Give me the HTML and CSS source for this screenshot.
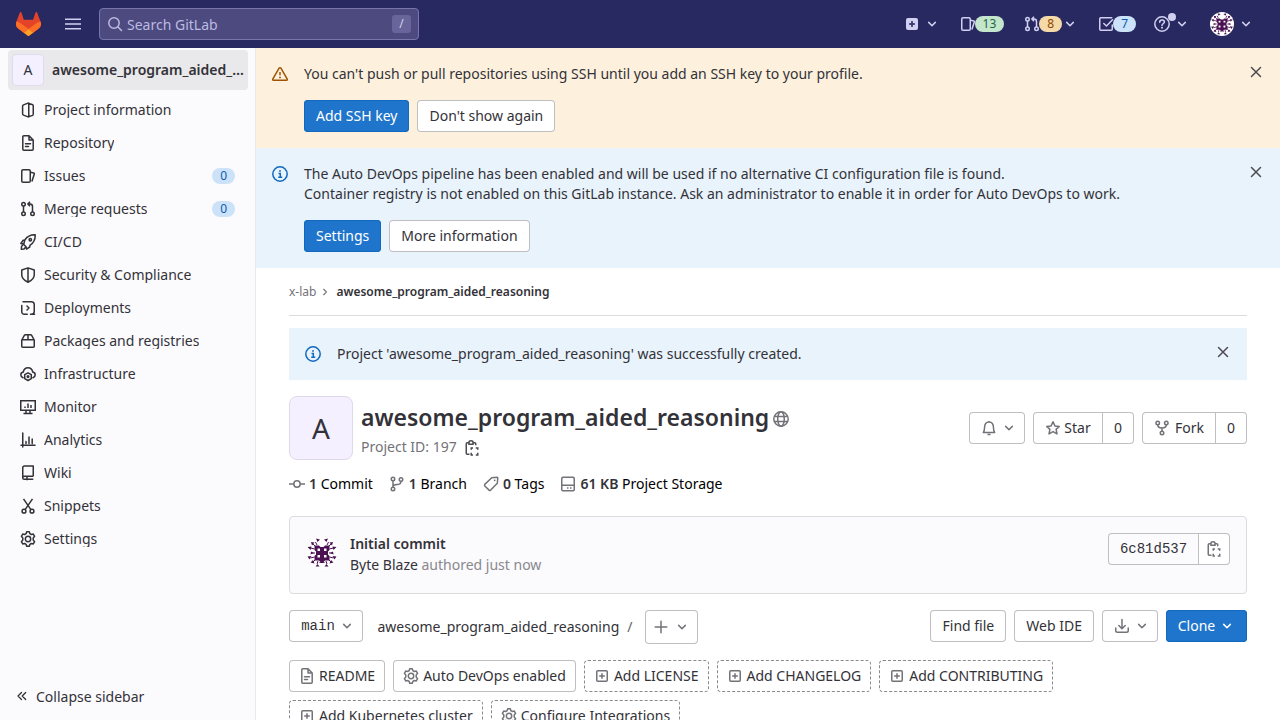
FILE: index.html
```html
<!DOCTYPE html>
<html lang="en">
<head>
<meta charset="utf-8">
<title>awesome_program_aided_reasoning · GitLab</title>
<link rel="stylesheet" href="styles.css">
</head>
<body>
<svg class="sprite" aria-hidden="true">
  <symbol id="chevron" viewBox="0 0 12 12"><path d="M2.7 4.4 6 7.7l3.3-3.3" stroke-linecap="round" stroke-linejoin="round"/></symbol>
  <symbol id="close" viewBox="0 0 16 16"><path d="m3.5 3.5 9 9m0-9-9 9" stroke-linecap="round"/></symbol>
  <symbol id="search" viewBox="0 0 16 16"><circle cx="7" cy="7" r="5.2"/><path d="m11 11 3.5 3.5" stroke-linecap="round"/></symbol>
  <symbol id="info" viewBox="0 0 16 16"><circle cx="8" cy="8" r="7.2"/><path d="M6.5 7.5h1.8v3.7M6.2 11.3h4"/><circle cx="8" cy="4.9" r=".95" fill="currentColor" stroke="none"/></symbol>
  <symbol id="warn" viewBox="0 0 16 16"><path d="M8 1.700c-.4 0-.7.2-.9.5L.9 12.800c-.4.7 0 1.500.8 1.500h12.600c.8 0 1.200-.8.8-1.500L8.900 2.200c-.2-.3-.5-.5-.9-.5ZM8 6v3.200" stroke-linejoin="round"/><circle cx="8" cy="11.400" r=".95" fill="currentColor" stroke="none"/></symbol>
  <symbol id="project" viewBox="0 0 16 16"><path d="M8.750.9 3.500 2.900q-.9.4-.9 1.300v7.600q0 .9.900 1.300l5.250 2ZM8.750 1.500l3.400.9q1.100.3 1.100 1.400v8.400q0 1.100-1.100 1.400l-3.400.9" stroke-linejoin="round"/></symbol>
  <symbol id="doc" viewBox="0 0 16 16"><path d="M9 .75H3.800a1 1 0 0 0-1 1v12.500a1 1 0 0 0 1 1h8.400a1 1 0 0 0 1-1V5L9 .75ZM9 .75V5h4.200" stroke-linejoin="round"/><path d="M5.500 8.700h5M5.500 11.500h3" stroke-linecap="round"/></symbol>
  <symbol id="issues" viewBox="0 0 16 16"><rect x="1.750" y="1.750" width="8.500" height="12.500" rx="1.300"/><path d="M10.500 4.200 13.800 5c.4.100.6.500.5.900l-2.400 7.600" stroke-linejoin="round"/></symbol>
  <symbol id="merge" viewBox="0 0 16 16"><circle cx="3.500" cy="3.300" r="1.750"/><circle cx="3.500" cy="12.700" r="1.750"/><circle cx="12.500" cy="12.700" r="1.750"/><path d="M3.500 5v6M12.500 11V5.500q0-2.500-2.500-2.500H8.500M10 .8 7.900 3 10 5.200"/></symbol>
  <symbol id="rocket" viewBox="0 0 16 16"><path d="M15.200.8C10.500.600 7.200 2.400 4.800 6L3 6.300.9 9.500l2.400.5 2.700 2.700.5 2.400 3.200-2.100.4-1.800c3.600-2.400 5.300-5.700 5.100-10.400ZM3.300 10l-1.800 2.700-.2 2.500 2.700-.3 2-2.200M4.800 6l-1 4" stroke-linejoin="round"/><circle cx="10.300" cy="5.800" r="1.200"/></symbol>
  <symbol id="shield" viewBox="0 0 16 16"><path d="M8 .9 1.750 3v4.800c0 3.400 2.200 5.600 6.250 7.400 4.050-1.800 6.250-4 6.250-7.400V3L8 .9v14.200" stroke-linejoin="round"/></symbol>
  <symbol id="deploy" viewBox="0 0 16 16"><path d="M3 1.750h8.250a3 3 0 0 1 3 3v6.500a3 3 0 0 1-3 3H10.500M1.750 5.500v6.250a2.500 2.500 0 0 0 2.500 2.500h3M1.750 5.500v1.500M12 14.250h2.500M7 6l2 2-2 2" stroke-linecap="round" stroke-linejoin="round"/></symbol>
  <symbol id="package" viewBox="0 0 16 16"><path d="M1.750 7 4.200 2.700q.4-.950 1.300-.950h5q.9 0 1.300.950L14.250 7v6.200q0 1-1 1H2.750q-1 0-1-1ZM1.750 6.700h12.500M8 1.750v5" stroke-linejoin="round"/></symbol>
  <symbol id="cloud" viewBox="0 0 16 16"><path d="M3 11.700C1.500 11.200.8 10.200.8 8.800c0-1.500 1-2.600 2.500-2.800C3.800 3.300 5.500 1.800 8 1.800S12.200 3.300 12.700 6c1.500.2 2.500 1.300 2.500 2.800 0 1.400-.7 2.400-2.200 2.900" stroke-linecap="round"/><path d="m8 6.800 3.300 1.900v3.900L8 14.500l-3.300-1.900V8.700Z" stroke-linejoin="round"/><circle cx="8" cy="10.600" r=".8"/></symbol>
  <symbol id="monitor" viewBox="0 0 16 16"><path d="M.75 1.750h14.500v9.500H.75ZM3.500 14.500h9M6 11.300v3M10 11.300v3M5 7.500V9M8 4.500V9M11 6V9"/></symbol>
  <symbol id="chart" viewBox="0 0 16 16"><path d="M2.750 1v14M1 13.250h14M6 9.500v2M9 5v6.500M12.200 7v4.500" stroke-linecap="round"/></symbol>
  <symbol id="book" viewBox="0 0 16 16"><path d="M13.250 11.250V.9H4.500q-1.750 0-1.750 1.750V13q0 1.250 1.500 1.250h9M2.750 12.700q.2-1.450 1.750-1.450h8.750M7 11.300v4" stroke-linejoin="round"/></symbol>
  <symbol id="scissors" viewBox="0 0 16 16"><circle cx="4" cy="13.200" r="1.900"/><circle cx="12" cy="13.200" r="1.900"/><path d="M3.500.8 10.900 11.600M12.500.8 5.100 11.600"/></symbol>
  <symbol id="gear" viewBox="0 0 16 16"><path d="M6.700.8h2.600l.6 1.900 1.400.8 2-.4 1.300 2.200L13.200 6.900v2.200l1.400 1.600-1.300 2.200-2-.4-1.400.8-.6 1.900H6.700l-.6-1.900-1.400-.8-2 .4-1.300-2.200L2.800 9.100V6.900L1.400 5.300l1.300-2.200 2 .4 1.400-.8Z" stroke-linejoin="round"/><circle cx="8" cy="8" r="2.700"/></symbol>
  <symbol id="collapse" viewBox="0 0 16 16"><path d="M7.500 4.500 4 8l3.500 3.500M11.700 4.500 8.200 8l3.500 3.500" stroke-width="1.300" stroke-linecap="round" stroke-linejoin="round"/></symbol>
  <symbol id="globe" viewBox="0 0 16 16"><circle cx="8" cy="8" r="7.200"/><ellipse cx="8" cy="8" rx="3.300" ry="7.200"/><path d="M1.500 5.500h13M1.500 10.500h13"/></symbol>
  <symbol id="copy" viewBox="0 0 16 16"><path d="M5 2.750H3.250a1 1 0 0 0-1 1v9.500a1 1 0 0 0 1 1H5.500M9.500 2.750h1.250a1 1 0 0 1 1 1v1.500M5 4.250v-2q0-1.500 2-1.500t2 1.500v2Z"/><path d="M7.250 9.750V8H9M11.750 8h2V9.750M13.750 12.750v2.250h-2M9 15H7.250V12.750"/></symbol>
  <symbol id="commit" viewBox="0 0 16 16"><circle cx="8" cy="8" r="3.200"/><path d="M0 8h4.800M11.200 8H16"/></symbol>
  <symbol id="branch" viewBox="0 0 16 16"><circle cx="4" cy="3" r="1.750"/><circle cx="12" cy="3.500" r="1.750"/><circle cx="4" cy="13" r="1.750"/><path d="M4 4.800v6.400M12 5.200q0 3.300-4 3.300-4 0-4 2.700"/></symbol>
  <symbol id="tag" viewBox="0 0 16 16"><path d="M8.700 1.700 14 1.200q.8 0 .8.800l-.5 5.300-6.600 6.800q-.8.700-1.600 0L1.800 10q-.7-.8 0-1.600Z" stroke-linejoin="round"/><circle cx="11.700" cy="4.300" r=".9" fill="currentColor" stroke="none"/></symbol>
  <symbol id="disk" viewBox="0 0 16 16"><rect x="1.750" y="1.250" width="12.500" height="13.500" rx="1.200"/><path d="M1.800 9.250h12.400M7 12h1.500M10 12h1.500"/></symbol>
  <symbol id="bell" viewBox="0 0 16 16"><path d="M2.300 12.500h11.400c-1-1-1.200-2-1.200-4.500 0-3.800-1.500-6-4.500-6S3.500 4.200 3.500 8c0 2.500-.2 3.500-1.200 4.500ZM8 2V.9M6.500 14.500h3" stroke-linejoin="round"/></symbol>
  <symbol id="star" viewBox="0 0 16 16"><path d="m8 1.800 1.900 4.100 4.400.5-3.200 3 .9 4.500-4-2.300-4 2.300.9-4.500-3.200-3 4.400-.5Z" stroke-linejoin="round"/></symbol>
  <symbol id="fork" viewBox="0 0 16 16"><circle cx="3.700" cy="3" r="1.750"/><circle cx="12.300" cy="3" r="1.750"/><circle cx="8" cy="13" r="1.750"/><path d="M3.700 4.800Q3.700 8 8 8t4.300-3.200M8 8v3.200"/></symbol>
  <symbol id="plus" viewBox="0 0 16 16"><path d="M8 2.200v11.600M2.200 8h11.600" stroke-linecap="round"/></symbol>
  <symbol id="plusbox" viewBox="0 0 16 16"><rect x="2.750" y="2.750" width="10.500" height="10.500" rx="1"/><path d="M8 5.200v5.600M5.200 8h5.600"/></symbol>
  <symbol id="download" viewBox="0 0 16 16"><path d="M8 1.500v9M4.800 7.500 8 10.700l3.200-3.200M1.750 10v2.500q0 1.750 1.750 1.750h9q1.750 0 1.750-1.750V10" stroke-linecap="round" stroke-linejoin="round"/></symbol>
  <symbol id="todo" viewBox="0 0 16 16"><path d="M14.250 9v4.200q0 1-1 1H2.750q-1 0-1-1V2.800q0-1 1-1h11M5.800 7.500 8.500 10l6-6.200" stroke-linecap="round"/></symbol>
  <symbol id="help" viewBox="0 0 16 16"><circle cx="8" cy="8" r="7.200"/><path d="M5.700 6.300C5.700 4.900 6.700 4 8 4s2.400.9 2.400 2.100C10.400 7.500 8 7.600 8 9.500" stroke-linecap="round"/><circle cx="8" cy="11.800" r="1" fill="currentColor" stroke="none"/></symbol>
  <symbol id="identicon" viewBox="0 0 32 32">
    <circle cx="16" cy="16" r="16" fill="#fff" stroke="none"/>
    <g fill="#4b1152" stroke="none">
      <path d="M8.500 8.500H13L14.500 10h3L19 8.500h4.500V13L22 14.500v3l1.500 1.500v4.500H19L17.500 25l2 1h-7l2-1-1.500-1.500H8.500V19l1.500-1.500v-3L8.500 13Z"/>
      <path d="M10 1.500l4 1-2.500 2.500ZM22 1.500l-4 1 2.500 2.500ZM5 5l3.500.5L6 8.500ZM27 5l-3.500.5L26 8.500ZM1.500 10l4-.5-1 3.500ZM30.500 10l-4-.5 1 3.500ZM5 14.500l3 1.500-3.500 1.500ZM27 14.500l-3 1.500 3.500 1.500ZM1.500 19.500l4-.5-2 3.500ZM30.500 19.500l-4-.5 2 3.500ZM4.500 25.500l2.500-2.500 1.500 3.500ZM27.500 25.500l-2.500-2.500-1.500 3.500ZM9.500 29.500l2-2.500 2 2.500ZM22.500 29.500l-2-2.500-2 2.500ZM8.500 8.500l-2-1 .5-1ZM23.500 8.500l2-1-.5-1Z"/>
      <path d="M9 9 6 6M23 9l3-3M9 23l-3 3M23 23l3 3M6 16h3M26 16h-3M11 8 9.500 5M21 8l1.500-3M8.500 20l-4 1M23.500 20l4 1M8.500 12l-4-1M23.500 12l4-1M12 24l-1 3M20 24l1 3" stroke="#4b1152" stroke-width="1"/>
    </g>
    <path d="M11.500 11.500h2.500v2.500h-2.500ZM18 11.500h2.500v2.500H18ZM11.500 18h2.500v2.500h-2.500ZM18 18h2.500v2.500H18Z" fill="#fff" stroke="none"/>
  </symbol>
</svg>

<header class="topbar">
  <svg class="logo" viewBox="0 0 25 24"><path fill="#e24329" d="m24.507 9.500-.034-.09L21.082.562a.896.896 0 0 0-1.694.091l-2.290 7.010H7.825L5.535.653a.898.898 0 0 0-1.694-.09L.451 9.411.416 9.500a6.297 6.297 0 0 0 2.090 7.278l.012.010.030.022 5.160 3.867 2.560 1.935 1.554 1.176a1.051 1.051 0 0 0 1.268 0l1.555-1.176 2.560-1.935 5.197-3.890.014-.010A6.297 6.297 0 0 0 24.507 9.500Z"/><path fill="#fc6d26" d="m24.507 9.500-.034-.09a11.440 11.440 0 0 0-4.560 2.051l-7.447 5.632 4.742 3.584 5.197-3.890.014-.010A6.297 6.297 0 0 0 24.507 9.500Z"/><path fill="#fca326" d="m7.707 20.677 2.560 1.935 1.555 1.176a1.051 1.051 0 0 0 1.268 0l1.555-1.176 2.560-1.935-4.743-3.584Z"/><path fill="#fc6d26" d="M5.010 11.461a11.430 11.430 0 0 0-4.560-2.050L.416 9.500a6.297 6.297 0 0 0 2.090 7.278l.012.010.030.022 5.160 3.867 4.745-3.584Z"/></svg>
  <svg class="burger" viewBox="0 0 16 16"><path d="M0 3.200h16M0 8h16M0 12.800h16"/></svg>
  <div class="search"><svg class="icon"><use href="#search"/></svg><span class="placeholder">Search GitLab</span><kbd>/</kbd></div>
  <nav class="tools">
    <span class="tool new"><svg class="icon" viewBox="0 0 16 16"><rect x="2" y="2" width="12" height="12" rx="2" fill="#d1d0f0" stroke="none"/><path d="M8 5v6M5 8h6" stroke="#292961"/></svg><svg class="chev"><use href="#chevron"/></svg></span>
    <span class="tool"><svg class="icon"><use href="#issues"/></svg><b class="badge green">13</b></span>
    <span class="tool mr"><svg class="icon"><use href="#merge"/></svg><b class="badge orange">8</b><svg class="chev"><use href="#chevron"/></svg></span>
    <span class="tool todo"><svg class="icon"><use href="#todo"/></svg><b class="badge blue">7</b></span>
    <span class="tool help"><svg class="icon"><use href="#help"/></svg><i class="dot"></i><svg class="chev"><use href="#chevron"/></svg></span>
    <span class="tool user"><svg class="face"><use href="#identicon"/></svg><svg class="chev"><use href="#chevron"/></svg></span>
  </nav>
</header>

<div class="layout">
  <aside class="sidebar">
    <div class="context"><span class="letter">A</span><strong>awesome_program_aided_reasoning</strong></div>
    <ul class="menu">
      <li><svg class="icon"><use href="#project"/></svg><span>Project information</span></li>
      <li><svg class="icon"><use href="#doc"/></svg><span>Repository</span></li>
      <li><svg class="icon"><use href="#issues"/></svg><span>Issues</span><b class="badge blue">0</b></li>
      <li><svg class="icon"><use href="#merge"/></svg><span>Merge requests</span><b class="badge blue">0</b></li>
      <li><svg class="icon"><use href="#rocket"/></svg><span>CI/CD</span></li>
      <li><svg class="icon"><use href="#shield"/></svg><span>Security &amp; Compliance</span></li>
      <li><svg class="icon"><use href="#deploy"/></svg><span>Deployments</span></li>
      <li><svg class="icon"><use href="#package"/></svg><span>Packages and registries</span></li>
      <li><svg class="icon"><use href="#cloud"/></svg><span>Infrastructure</span></li>
      <li><svg class="icon"><use href="#monitor"/></svg><span>Monitor</span></li>
      <li><svg class="icon"><use href="#chart"/></svg><span>Analytics</span></li>
      <li><svg class="icon"><use href="#book"/></svg><span>Wiki</span></li>
      <li><svg class="icon"><use href="#scissors"/></svg><span>Snippets</span></li>
      <li><svg class="icon"><use href="#gear"/></svg><span>Settings</span></li>
    </ul>
    <div class="collapse"><svg class="icon"><use href="#collapse"/></svg><span>Collapse sidebar</span></div>
  </aside>

  <main class="main">
    <section class="alert warning">
      <svg class="icon mark"><use href="#warn"/></svg>
      <div class="alert-body"><p>You can't push or pull repositories using SSH until you add an SSH key to your profile.</p>
        <div class="actions"><button class="btn primary">Add SSH key</button><button class="btn">Don't show again</button></div></div>
      <svg class="icon close"><use href="#close"/></svg>
    </section>
    <section class="alert">
      <svg class="icon mark"><use href="#info"/></svg>
      <div class="alert-body"><p>The Auto DevOps pipeline has been enabled and will be used if no alternative CI configuration file is found.<br>Container registry is not enabled on this GitLab instance. Ask an administrator to enable it in order for Auto DevOps to work.</p>
        <div class="actions"><button class="btn primary">Settings</button><button class="btn">More information</button></div></div>
      <svg class="icon close"><use href="#close"/></svg>
    </section>

    <div class="content">
      <nav class="crumbs"><span>x-lab</span><svg class="chev right"><use href="#chevron"/></svg><strong>awesome_program_aided_reasoning</strong></nav>
      <section class="alert flash">
        <svg class="icon mark"><use href="#info"/></svg>
        <div class="alert-body"><p>Project 'awesome_program_aided_reasoning' was successfully created.</p></div>
        <svg class="icon close"><use href="#close"/></svg>
      </section>

      <section class="project">
        <span class="avatar">A</span>
        <div class="names">
          <h1>awesome_program_aided_reasoning<svg class="icon"><use href="#globe"/></svg></h1>
          <p>Project ID: 197<svg class="icon"><use href="#copy"/></svg></p>
        </div>
        <div class="project-actions">
          <button class="btn drop"><svg class="icon"><use href="#bell"/></svg><svg class="chev"><use href="#chevron"/></svg></button>
          <div class="group"><button class="btn star"><svg class="icon"><use href="#star"/></svg>Star</button><button class="btn count">0</button></div>
          <div class="group"><button class="btn fork"><svg class="icon"><use href="#fork"/></svg>Fork</button><button class="btn count">0</button></div>
        </div>
      </section>

      <div class="stats">
        <span><svg class="icon"><use href="#commit"/></svg><strong>1</strong>&nbsp;Commit</span>
        <span><svg class="icon"><use href="#branch"/></svg><strong>1</strong>&nbsp;Branch</span>
        <span><svg class="icon"><use href="#tag"/></svg><strong>0</strong>&nbsp;Tags</span>
        <span><svg class="icon"><use href="#disk"/></svg><strong>61 KB</strong>&nbsp;Project Storage</span>
      </div>

      <section class="commit">
        <svg class="face"><use href="#identicon"/></svg>
        <div class="commit-text"><strong>Initial commit</strong><p>Byte Blaze <span>authored just now</span></p></div>
        <div class="group"><button class="btn sha">6c81d537</button><button class="btn copy"><svg class="icon"><use href="#copy"/></svg></button></div>
      </section>

      <div class="tree">
        <button class="btn ref">main<svg class="chev"><use href="#chevron"/></svg></button>
        <span class="path">awesome_program_aided_reasoning</span><span class="slash">/</span>
        <button class="btn add"><svg class="icon"><use href="#plus"/></svg><svg class="chev"><use href="#chevron"/></svg></button>
        <div class="tree-actions">
          <button class="btn find">Find file</button><button class="btn">Web IDE</button>
          <button class="btn drop"><svg class="icon"><use href="#download"/></svg><svg class="chev"><use href="#chevron"/></svg></button>
          <button class="btn primary clone">Clone<svg class="chev"><use href="#chevron"/></svg></button>
        </div>
      </div>

      <div class="chips">
        <button class="btn chip"><svg class="icon"><use href="#doc"/></svg>README</button>
        <button class="btn chip"><svg class="icon"><use href="#gear"/></svg>Auto DevOps enabled</button>
        <button class="btn chip dashed"><svg class="icon"><use href="#plusbox"/></svg>Add LICENSE</button>
        <button class="btn chip dashed"><svg class="icon"><use href="#plusbox"/></svg>Add CHANGELOG</button>
        <button class="btn chip dashed"><svg class="icon"><use href="#plusbox"/></svg>Add CONTRIBUTING</button>
        <button class="btn chip dashed"><svg class="icon"><use href="#plusbox"/></svg>Add Kubernetes cluster</button>
        <button class="btn chip dashed"><svg class="icon"><use href="#gear"/></svg>Configure Integrations</button>
      </div>
    </div>
  </main>
</div>
</body>
</html>
```
FILE: styles.css
```css
* { box-sizing: border-box; }
body {
  margin: 0;
  height: 720px;
  overflow: hidden;
  background: #fff;
  color: #333238;
  font: 14px/20px "Noto Sans", sans-serif;
}
p, h1, ul { margin: 0; padding: 0; }
strong { font-weight: 600; }
.sprite { display: none; }
svg { flex: none; fill: none; stroke: currentColor; stroke-width: 1.5; }
.icon { width: 16px; height: 16px; }
.chev { width: 12px; height: 12px; }

/* Top bar */
.topbar { display: flex; align-items: center; height: 48px; padding: 0 28px 0 16px; background: #292961; color: #d1d0f0; }
.logo { width: 25px; height: 24px; stroke: none; }
.burger { width: 16px; height: 16px; margin: 0 18px 0 24px; }
.search { display: flex; align-items: center; width: 320px; height: 32px; padding: 0 7px; border: 1px solid #7775ae; border-radius: 4px; background: #4d4a80; color: #bbbae0; }
.placeholder { flex: 1; margin-left: 4px; padding-top: 1px; }
kbd { width: 19px; height: 18px; border-radius: 3px; background: #67659a; color: #d1d0f0; font: 12px/17px "Noto Sans", sans-serif; text-align: center; }
.tools { display: flex; align-items: center; margin-left: auto; }
.tool { display: flex; align-items: center; }
.new { margin-right: 22px; }
.new .chev { margin-left: 6px; }
.badge { height: 16px; padding: 0 8px; border-radius: 8px; font-size: 12px; line-height: 16px; font-weight: 400; }
.tool .badge { margin-left: -1px; }
.green { background: #c3e6cd; color: #24663b; }
.orange { background: #f5d9a8; color: #8f4700; }
.blue { background: #cbe2f9; color: #0b5cad; }
.mr { margin-left: 20px; }
.mr .chev { margin-left: 2px; }
.todo { margin-left: 22px; }
.help { position: relative; margin-left: 18px; }
.help .chev { margin-left: 6px; }
.dot { position: absolute; top: -3px; left: 14px; width: 8px; height: 8px; border-radius: 50%; background: #d1d0f0; }
.user { margin-left: 22px; }
.user .face { width: 24px; height: 24px; }
.user .chev { margin: 0 0 0 6px; }

.layout { display: flex; height: 672px; }

/* Sidebar */
.sidebar { display: flex; flex-direction: column; width: 256px; border-right: 1px solid #e9e8ee; background: #fbfafd; }
.context { display: flex; align-items: center; height: 40px; margin: 2px 7px 0 8px; padding: 0 4px; border-radius: 4px; background: #e9e8eb; }
.context strong { overflow: hidden; margin-left: 8px; text-overflow: ellipsis; white-space: nowrap; }
.letter { flex: none; width: 32px; height: 32px; border: 1px solid #e0dcee; border-radius: 4px; background: #f4f0ff; line-height: 30px; text-align: center; }
.menu { flex: 1; margin-top: 4px; list-style: none; }
.menu li { display: flex; align-items: center; height: 32px; margin-bottom: 1px; padding: 0 20px; }
.menu span { overflow: hidden; margin-left: 8px; line-height: 16px; }
.menu .badge { margin-left: auto; }
.collapse { display: flex; align-items: center; height: 48px; padding: 0 14px; }
.collapse span { margin-left: 6px; padding-top: 2px; }

/* Alerts and buttons */
.main { flex: 1; min-width: 0; }
.alert { display: flex; padding: 16px; background: #e9f3fc; }
.alert .mark { margin-top: 2px; color: #1068bf; }
.alert-body { flex: 1; margin-left: 16px; }
.alert .close { color: #4c4b51; }
.warning { background: #fdf1dd; }
.warning .mark { color: #9e5400; }
.actions { display: flex; gap: 8px; margin-top: 16px; }
.btn { display: inline-flex; flex: none; align-items: center; justify-content: center; height: 32px; padding: 0 12px; border: 0; border-radius: 4px; background: #fff; box-shadow: inset 0 0 0 1px #bfbfc3; color: #333238; font: 14px/16px "Noto Sans", sans-serif; white-space: nowrap; }
.btn svg { color: #737278; }
.primary { background: #1f75cb; box-shadow: inset 0 0 0 1px #1068bf; color: #fff; }
.btn.primary svg { color: #fff; }

/* Content */
.content { padding: 0 33px; }
.crumbs { display: flex; align-items: center; height: 48px; border-bottom: 1px solid #dcdcde; color: #737278; font-size: 12px; }
.crumbs strong { color: #333238; }
.right { width: 10px; height: 10px; margin: 0 6px 0 4px; transform: rotate(-90deg); stroke-width: 1.3; }
.flash { margin-top: 12px; }
.project { display: flex; align-items: center; height: 64px; margin-top: 16px; }
.avatar { width: 64px; height: 64px; border: 1px solid #ddd8eb; border-radius: 8px; background: #f4f0ff; font-size: 28px; line-height: 62px; text-align: center; }
.names { margin-left: 8px; }
h1 { display: flex; align-items: center; height: 32px; margin-top: 3px; font-size: 23px; font-weight: 600; }
h1 .icon { margin: 4px 0 0 4px; color: #737278; }
.names p { display: flex; align-items: center; height: 24px; margin-top: 2px; margin-bottom: -1px; color: #737278; }
.names p .icon { margin: 1px 0 0 7px; color: #4c4b51; }
.project-actions { display: flex; gap: 8px; margin-left: auto; }
.drop { width: 56px; padding: 0 10px 0 12px; }
.drop .chev { margin-left: 6px; }
.group { display: flex; }
.group .btn:first-child { border-radius: 4px 0 0 4px; }
.group .btn:last-child { margin-left: -1px; border-radius: 0 4px 4px 0; }
.star { width: 70px; }
.star .icon { margin-right: 3px; }
.fork { width: 74px; }
.fork .icon { margin-right: 5px; }
.count { width: 32px; }
.stats { display: flex; gap: 16px; margin-top: 14px; color: #000; }
.stats span { display: flex; align-items: center; }
.stats .icon { margin-right: 4px; color: #737278; }
.stats strong { color: #333238; }
.commit { display: flex; height: 78px; margin-top: 22px; padding: 16px; border: 1px solid #dcdcde; border-radius: 4px; background: #fbfafd; }
.commit .face { width: 32px; height: 32px; margin-top: 4px; }
.commit-text { margin-left: 12px; line-height: 21px; }
.commit-text span { color: #89888d; }
.commit .group { margin-left: auto; }
.sha, .ref { font-family: "Liberation Mono", monospace; }
.sha { width: 91px; background: #fbfafd; }
.copy { width: 32px; padding: 0; }
.tree { display: flex; height: 34px; margin-top: 16px; line-height: 34px; }
.ref { width: 74px; padding: 0 10px 0 12px; }
.ref .chev { margin-left: 6px; }
.path { margin-left: 14.5px; }
.slash { margin: 0 12.5px 0 8px; color: #626168; }
.add { width: 53px; height: 34px; padding: 0 10px 0 8px; }
.add .chev { margin-left: 7px; }
.tree-actions { display: flex; gap: 8px; margin-left: auto; }
.find { width: 76px; }
.clone { width: 81px; padding: 0 13px 0 11px; }
.clone .chev { margin-left: 6px; }
.chips { display: flex; flex-wrap: wrap; gap: 8px; margin-top: 16px; }
.chip { padding: 0 10px; }
.chip .icon { margin-right: 4px; }
.dashed { padding: 0 9px; border: 1px dashed #89888d; box-shadow: none; }
```
